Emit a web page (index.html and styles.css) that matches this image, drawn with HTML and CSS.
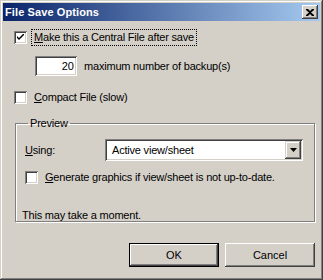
FILE: index.html
```html
<!DOCTYPE html>
<html lang="en">
<head>
    <meta charset="UTF-8">
    <title>File Save Options</title>
    <link rel="stylesheet" href="styles.css">
</head>
<body>
    <div class="dialog">
        <div class="titlebar">
            <span class="title">File Save Options</span>
            <button class="close-btn" aria-label="Close">
                <svg width="8" height="7" viewBox="0 0 8 7">
                    <path d="M0 0h2l2 2 2-2h2v1L5 3.5 8 6v1H6L4 5 2 7H0V6l3-2.5L0 1z" fill="#000"/>
                </svg>
            </button>
        </div>

        <div class="content">
            <div class="check-row first">
                <span class="checkbox checked">
                    <svg width="7" height="7" viewBox="0 0 7 7">
                        <path d="M0 2l2 2 5-5v2L2 6 0 4z" fill="#000"/>
                    </svg>
                </span>
                <span class="label focused"><u>M</u>ake this a Central File after save</span>
            </div>

            <div class="backup-row">
                <input type="text" class="num-input" value="20">
                <span>maximum number of backup(s)</span>
            </div>

            <div class="check-row compact">
                <span class="checkbox"></span>
                <span class="label"><u>C</u>ompact File (slow)</span>
            </div>

            <fieldset class="group">
                <legend>Preview</legend>
                <div class="using-row">
                    <span class="using-label"><u>U</u>sing:</span>
                    <div class="combo">
                        <span class="combo-text">Active view/sheet</span>
                        <span class="combo-btn">
                            <svg width="7" height="4" viewBox="0 0 7 4">
                                <path d="M0 0h7L3.5 4z" fill="#000"/>
                            </svg>
                        </span>
                    </div>
                </div>
                <div class="check-row generate">
                    <span class="checkbox"></span>
                    <span class="label"><u>G</u>enerate graphics if view/sheet is not up-to-date.</span>
                </div>
                <p class="note">This may take a moment.</p>
            </fieldset>

            <div class="buttons">
                <button class="btn default">OK</button>
                <button class="btn">Cancel</button>
            </div>
        </div>
    </div>
</body>
</html>
```

FILE: styles.css
```css
* {
    box-sizing: border-box;
}
body {
    margin: 0;
    background: #d4d0c8;
    font-family: "Liberation Sans", Arial, sans-serif;
    font-size: 11px;
    letter-spacing: -0.2px;
    color: #000;
}
.dialog {
    width: 323px;
    height: 280px;
    padding: 3px;
    background: #d4d0c8;
    box-shadow: inset -1px -1px #404040, inset 1px 1px #d4d0c8,
                inset -2px -2px #808080, inset 2px 2px #fff;
}
.titlebar {
    height: 18px;
    display: flex;
    align-items: center;
    justify-content: space-between;
    padding: 0 2px 0 2px;
    background: linear-gradient(to right, #0a246a, #a6caf0);
}
.title {
    color: #fff;
    font-weight: bold;
    font-size: 11px;
    letter-spacing: 0.1px;
}
.close-btn {
    width: 16px;
    height: 14px;
    padding: 0;
    border: none;
    background: #d4d0c8;
    display: flex;
    align-items: center;
    justify-content: center;
    box-shadow: inset -1px -1px #404040, inset 1px 1px #fff, inset -2px -2px #808080;
}
.content {
    padding: 8px 5px 0 11px;
}
.check-row {
    display: flex;
    align-items: center;
    height: 17px;
}
.checkbox {
    width: 13px;
    height: 13px;
    flex: none;
    background: #fff;
    display: flex;
    align-items: center;
    justify-content: center;
    box-shadow: inset 1px 1px #808080, inset -1px -1px #fff,
                inset 2px 2px #404040, inset -2px -2px #d4d0c8;
}
.label {
    margin-left: 4px;
    padding: 1px 2px;
    border: 1px solid transparent;
    line-height: 13px;
}
.label.focused {
    border: 1px dotted #000;
}
.backup-row {
    display: flex;
    align-items: center;
    margin-top: 10px;
    margin-left: 21px;
}
.num-input {
    width: 42px;
    height: 20px;
    border: none;
    padding: 0 3px 0 0;
    text-align: right;
    font: inherit;
    background: #fff;
    box-shadow: inset 1px 1px #808080, inset -1px -1px #fff,
                inset 2px 2px #404040, inset -2px -2px #d4d0c8;
    outline: none;
}
.backup-row span {
    margin-left: 7px;
}
.compact {
    margin-top: 13px;
}
.group {
    margin: 11px 0 0 1px;
    width: 300px;
    height: 105px;
    padding: 9px 8px 0 9px;
    border: 1px solid #808080;
    box-shadow: inset 1px 1px #fff, 1px 1px #fff;
}
.group legend {
    padding: 0 2px;
    margin-left: 3px;
    line-height: 13px;
}
.using-row {
    display: flex;
    align-items: center;
}
.using-label {
    width: 80px;
}
.combo {
    width: 198px;
    height: 22px;
    background: #fff;
    display: flex;
    align-items: center;
    justify-content: space-between;
    padding: 2px;
    box-shadow: inset 1px 1px #808080, inset -1px -1px #fff,
                inset 2px 2px #404040, inset -2px -2px #d4d0c8;
}
.combo-text {
    padding-left: 5px;
}
.combo-btn {
    width: 16px;
    height: 18px;
    background: #d4d0c8;
    display: flex;
    align-items: center;
    justify-content: center;
    box-shadow: inset -1px -1px #404040, inset 1px 1px #d4d0c8,
                inset -2px -2px #808080, inset 2px 2px #fff;
}
.generate {
    margin-top: 8px;
}
.note {
    margin: 23px 0 0 -3px;
}
.buttons {
    display: flex;
    justify-content: flex-end;
    gap: 6px;
    margin-top: 21px;
}
.btn {
    width: 90px;
    height: 24px;
    border: none;
    padding: 0;
    font: inherit;
    color: #000;
    background: #d4d0c8;
    box-shadow: inset -1px -1px #404040, inset 1px 1px #fff, inset -2px -2px #808080;
}
.btn.default {
    border: 1px solid #000;
}
```
